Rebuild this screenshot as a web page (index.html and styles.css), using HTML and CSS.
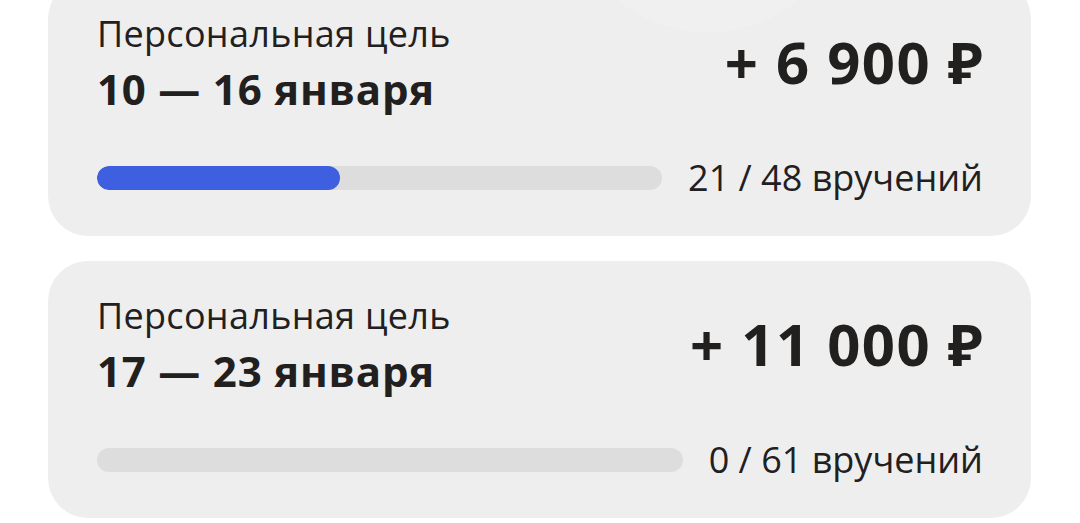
FILE: index.html
```html
<!DOCTYPE html>
<html lang="ru">
<head>
<meta charset="utf-8">
<link rel="stylesheet" href="styles.css">
</head>
<body>
<div class="list">
  <div class="card card-first">
    <div class="glow"></div>
    <div class="top">
      <div class="titles">
        <div class="label">Персональная цель</div>
        <div class="dates">10 — 16 января</div>
      </div>
      <div class="amount">+ 6 900 ₽</div>
    </div>
    <div class="progress">
      <div class="track"><div class="fill" style="width: 43%"></div></div>
      <div class="count">21 / 48 вручений</div>
    </div>
  </div>
  <div class="card">
    <div class="top">
      <div class="titles">
        <div class="label">Персональная цель</div>
        <div class="dates">17 — 23 января</div>
      </div>
      <div class="amount">+ 11 000 ₽</div>
    </div>
    <div class="progress">
      <div class="track"><div class="fill" style="width: 0%"></div></div>
      <div class="count">0 / 61 вручений</div>
    </div>
  </div>
</div>
</body>
</html>
```
FILE: styles.css
```css
* { box-sizing: border-box; }
html, body { margin: 0; padding: 0; background: #ffffff; overflow: hidden; }
body {
  font-family: "Open Sans", "Noto Sans", sans-serif;
  color: #21201f;
  width: 1080px;
  height: 523px;
}
.list {
  display: flex;
  flex-direction: column;
  gap: 25px;
  padding: 0 49px 0 48px;
  margin-top: -21px;
}
.card {
  position: relative;
  overflow: hidden;
  height: 257px;
  background: #eeeeee;
  border-radius: 40px;
  padding: 30px 48px 38px 49px;
  display: flex;
  flex-direction: column;
}
.glow {
  position: absolute;
  left: 520px;
  top: -226px;
  width: 280px;
  height: 280px;
  border-radius: 50%;
  background: #f0f0f0;
}
.top {
  position: relative;
  display: flex;
  justify-content: space-between;
  align-items: center;
}
.label {
  font-size: 36px;
  line-height: 50px;
  font-weight: 400;
  letter-spacing: 0.3px;
}
.dates {
  font-size: 42px;
  line-height: 58px;
  font-weight: 700;
  letter-spacing: 0.8px;
  margin-top: 1px;
}
.amount {
  font-size: 58px;
  line-height: 80px;
  font-weight: 700;
  letter-spacing: 1.5px;
  margin-right: -1px;
  margin-bottom: 4px;
}
.progress {
  margin-top: auto;
  display: flex;
  align-items: center;
  gap: 26px;
}
.track {
  flex: 1;
  height: 24px;
  border-radius: 12px;
  background: #dddddd;
  overflow: hidden;
}
.fill {
  height: 100%;
  border-radius: 12px;
  background: #3d5fe0;
}
.count {
  font-size: 36px;
  line-height: 40px;
  white-space: nowrap;
}
```
